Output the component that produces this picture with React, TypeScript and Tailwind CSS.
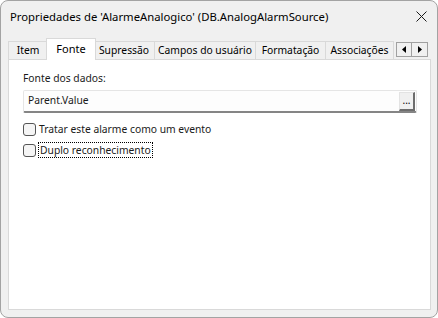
import React from "react";

const font = { fontFamily: '"Noto Sans", "Open Sans", sans-serif' };

function Tab({ label, w, selected }: { label: string; w: number; selected?: boolean }) {
  if (selected) {
    return (
      <div
        className="relative z-10 -mx-[2px] mb-[-1px] h-[22px] flex items-start justify-center pt-[2px] bg-white border border-b-0 border-[#d9d9d9] text-[11px] text-black whitespace-nowrap"
        style={{ width: w + 4 }}
      >
        {label}
      </div>
    );
  }
  return (
    <div
      className="h-[18px] flex items-center justify-center bg-[#f0f0f0] border border-b-0 border-[#d9d9d9] -ml-px first:ml-0 text-[10.3px] text-black whitespace-nowrap"
      style={{ width: w }}
    >
      {label}
    </div>
  );
}

export default function App() {
  return (
    <div className="w-[438px] h-[318px] bg-white" style={font}>
      <div className="h-full border border-[#a3a3a3] rounded-[8px] bg-[#f0f0f0] flex flex-col overflow-hidden">
        <div className="h-[31px] flex items-center justify-between pl-[9px] pr-[9px] shrink-0">
          <span className="text-[11.3px] text-black leading-none whitespace-nowrap">Propriedades de 'AlarmeAnalogico' (DB.AnalogAlarmSource)</span>
          <svg width="11" height="11" viewBox="0 0 11 11" className="mr-[1px]">
            <path d="M0.5 0.5 L10.5 10.5 M10.5 0.5 L0.5 10.5" stroke="#1a1a1a" strokeWidth="1" />
          </svg>
        </div>
        <div className="flex-1 flex flex-col px-[7px] pb-[7px]">
          <div className="h-[27px] flex items-end shrink-0">
            <Tab label="Item" w={40} />
            <Tab label="Fonte" w={46} selected />
            <Tab label="Supressão" w={62} />
            <Tab label="Campos do usuário" w={102} />
            <Tab label="Formatação" w={71} />
            <Tab label="Associações" w={69} />
            <div className="ml-[2px] mb-[2px] flex h-[15px]">
              <div className="w-[16px] h-full border border-[#a0a0a0] bg-[#f0f0f0] flex items-center justify-center">
                <svg width="4" height="7" viewBox="0 0 4 7"><path d="M4 0 L0 3.5 L4 7 Z" fill="#000" /></svg>
              </div>
              <div className="w-[16px] h-full border border-l-0 border-[#a0a0a0] bg-[#f0f0f0] flex items-center justify-center">
                <svg width="4" height="7" viewBox="0 0 4 7"><path d="M0 0 L4 3.5 L0 7 Z" fill="#000" /></svg>
              </div>
            </div>
          </div>
          <div className="flex-1 bg-white border border-[#d9d9d9] w-[423px] px-[14px] pt-[11px]">
            <div className="text-[10.3px] text-[#1a1a1a] leading-[14px]">Fonte dos dados:</div>
            <div className="mt-[5px] w-[394px] h-[23px] bg-[#fdfdfd] border border-[#e5e5e5] border-b-[2px] border-b-[#858585] rounded-[2px] flex items-center justify-between pl-[4px] pr-[1px]">
              <span className="text-[10.3px] text-[#1a1a1a]">Parent.Value</span>
              <div className="w-[16px] h-[19px] bg-[#f0f0f0] border border-[#e3e3e3] border-r-[#6d6d6d] border-b-[#6d6d6d] border-r-[2px] border-b-[2px] flex items-center justify-center text-[10px] leading-none text-black pb-[1px]">
                ...
              </div>
            </div>
            <div className="mt-[10px] flex items-center h-[13px]">
              <div className="w-[13px] h-[13px] rounded-[3px] border border-[#555] bg-[#f5f5f5]" />
              <span className="ml-[3px] text-[10.3px] text-[#1a1a1a]">Tratar este alarme como um evento</span>
            </div>
            <div className="mt-[6px] flex items-center h-[16px]">
              <div className="w-[13px] h-[13px] rounded-[3px] border border-[#555] bg-[#f5f5f5]" />
              <span className="ml-[2px] px-px text-[10.3px] text-[#1a1a1a] border border-dotted border-black leading-[14px]">Duplo reconhecimento</span>
            </div>
          </div>
        </div>
      </div>
    </div>
  );
}
